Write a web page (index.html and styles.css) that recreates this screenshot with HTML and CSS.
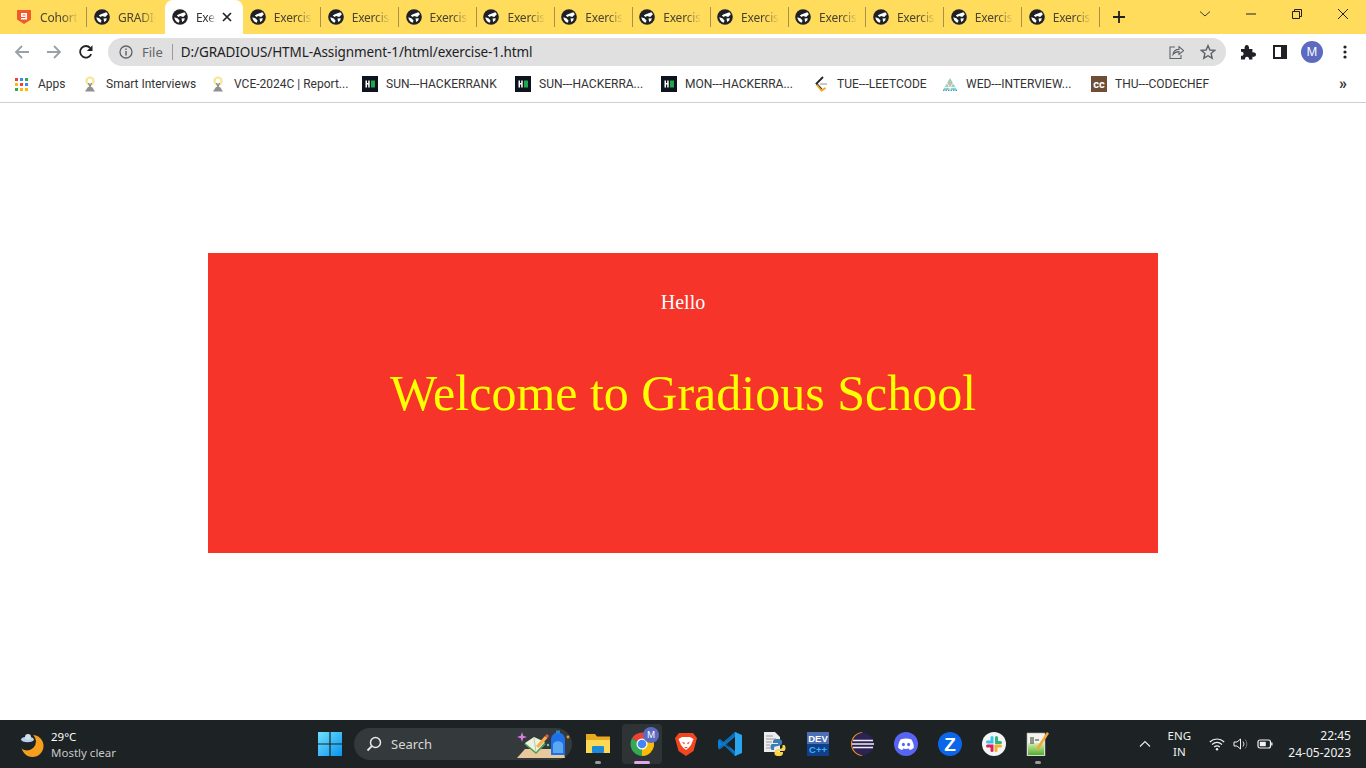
FILE: index.html
```html
<!DOCTYPE html>
<html lang="en">
<head>
    <meta charset="UTF-8">
    <meta name="viewport" content="width=device-width, initial-scale=1.0">
    <title>Exercise 1</title>
    <link rel="stylesheet" href="styles.css">
</head>
<body>
    <svg class="defs" width="0" height="0" aria-hidden="true">
        <symbol id="globe" viewBox="0 0 16 16">
            <circle cx="8" cy="8" r="7.8" fill="#202124"/>
            <path d="M4.8 6.6C6.6 4.8 9.6 4.6 12.4 3.2L13.9 5.3 11.2 7.9 8.2 6.9 6.5 8ZM2.3 8.2 5.8 9.6 7.6 11.8 6.6 13.7C4.3 13 2.700 11 2.3 8.2ZM9.5 9.4 12.8 9.200 12.2 11.4 10.2 13Z" fill="#fff"/>
        </symbol>
        <symbol id="hacker" viewBox="0 0 16 16">
            <rect width="16" height="16" fill="#0e141e"/>
            <path d="M3.5 4.5H5V7H6.2V4.5H7.7V11.5H6.2V8.6H5V11.5H3.5Z" fill="#fff"/>
            <rect x="9" y="4.5" width="4" height="7" fill="#1ba94c"/>
        </symbol>
        <symbol id="bulb" viewBox="0 0 16 16">
            <circle cx="8" cy="5" r="4.6" fill="#f5e690"/>
            <circle cx="8" cy="5" r="2.4" fill="#fff"/>
            <path d="M6.5 7 8 11 9.5 7" fill="none" stroke="#888" stroke-width="1.2"/>
            <path d="M3 15.5 6 11H10L13 15.5Z" fill="#8f8f8f"/>
        </symbol>
    </svg>

    <header class="tabstrip">
        <div class="tab">
            <svg class="favicon" viewBox="0 0 16 16"><path d="M1 1H15V10.5L8 15 1 10.5Z" fill="#f1592a"/><path d="M5 4H11V10.5H5V9H9.5V8H5ZM6.5 5.4V6.6H9.5V5.4Z" fill="#fff"/></svg>
            <span class="tab-title">Cohort</span>
        </div>
        <div class="tab tab-beforeactive"><svg class="favicon"><use href="#globe"/></svg><span class="tab-title">GRADIOUS</span></div>
        <div class="tab tab-active">
            <svg class="favicon"><use href="#globe"/></svg>
            <span class="tab-title">Exercise</span>
            <svg class="tab-close" viewBox="0 0 10 10"><path d="M1 1 9 9M9 1 1 9" stroke="#202124" stroke-width="1.7"/></svg>
        </div>
        <div class="tab"><svg class="favicon"><use href="#globe"/></svg><span class="tab-title">Exercise</span></div>
        <div class="tab"><svg class="favicon"><use href="#globe"/></svg><span class="tab-title">Exercise</span></div>
        <div class="tab"><svg class="favicon"><use href="#globe"/></svg><span class="tab-title">Exercise</span></div>
        <div class="tab"><svg class="favicon"><use href="#globe"/></svg><span class="tab-title">Exercise</span></div>
        <div class="tab"><svg class="favicon"><use href="#globe"/></svg><span class="tab-title">Exercise</span></div>
        <div class="tab"><svg class="favicon"><use href="#globe"/></svg><span class="tab-title">Exercise</span></div>
        <div class="tab"><svg class="favicon"><use href="#globe"/></svg><span class="tab-title">Exercise</span></div>
        <div class="tab"><svg class="favicon"><use href="#globe"/></svg><span class="tab-title">Exercise</span></div>
        <div class="tab"><svg class="favicon"><use href="#globe"/></svg><span class="tab-title">Exercise</span></div>
        <div class="tab"><svg class="favicon"><use href="#globe"/></svg><span class="tab-title">Exercise</span></div>
        <div class="tab"><svg class="favicon"><use href="#globe"/></svg><span class="tab-title">Exercise</span></div>
        <svg class="new-tab" viewBox="0 0 12 12"><path d="M6 0V12M0 6H12" stroke="#202124" stroke-width="1.8"/></svg>
        <div class="window-controls">
            <svg viewBox="0 0 12 12"><path d="M1 3.5 6 8 11 3.5" fill="none" stroke="#3c3a2a"/></svg>
            <svg viewBox="0 0 12 12"><path d="M1 6H11" stroke="#202124"/></svg>
            <svg viewBox="0 0 12 12"><path d="M3.5 3V1.5H10.5V8.5H9M1.5 3.5H8.5V10.5H1.5Z" fill="none" stroke="#202124"/></svg>
            <svg viewBox="0 0 12 12"><path d="M1 1 11 11M11 1 1 11" stroke="#202124"/></svg>
        </div>
    </header>

    <nav class="toolbar">
        <svg class="nav-icon" viewBox="0 0 16 16"><path d="M15 8H2M8 2 2 8 8 14" fill="none" stroke="#9aa0a6" stroke-width="1.8"/></svg>
        <svg class="nav-icon" viewBox="0 0 16 16"><path d="M1 8H14M8 2 14 8 8 14" fill="none" stroke="#9aa0a6" stroke-width="1.8"/></svg>
        <svg class="nav-icon" viewBox="0 0 16 16"><path d="M13.2 10.2A5.8 5.8 0 1 1 12.2 3.9" fill="none" stroke="#202124" stroke-width="1.8"/><path d="M14.5 1.2V7H8.8Z" fill="#202124"/></svg>
        <div class="omnibox">
            <svg class="info-icon" viewBox="0 0 14 14"><circle cx="7" cy="7" r="6" fill="none" stroke="#5f6368" stroke-width="1.3"/><path d="M7 6V10.4M7 3.4V5" stroke="#5f6368" stroke-width="1.5"/></svg>
            <span class="scheme">File</span>
            <span class="url">D:/GRADIOUS/HTML-Assignment-1/html/exercise-1.html</span>
            <svg class="omni-icon" viewBox="0 0 16 16"><path d="M7 3H2V14.5H13V11M5 10.5C5.5 6.5 8 5.4 11 5.4V2.6L15.5 6.6 11 10.4V7.6C8.6 7.6 6.6 8.4 5 10.5Z" fill="none" stroke="#5f6368" stroke-width="1.1"/></svg>
            <svg class="omni-icon" viewBox="0 0 16 16"><path d="M8 1.6 9.9 6 14.7 6.4 11.1 9.5 12.2 14.2 8 11.7 3.8 14.2 4.9 9.5 1.3 6.4 6.1 6Z" fill="none" stroke="#5f6368" stroke-width="1.4"/></svg>
        </div>
        <svg class="tool-icon tool-puzzle" viewBox="0 0 16 16"><path d="M1 5H4.6C4.2 2.8 5.2 1 6.8 1S9.4 2.8 9 5H12.4V8.4C14.6 8 16 9 16 10.6S14.6 13.2 12.4 12.8V15.5H9C9.2 13.8 8.4 12.8 7 12.8S4.8 13.8 5 15.5H1V11.8C2.6 12 3.6 11.2 3.6 9.8S2.6 7.6 1 7.8Z" fill="#202124"/></svg>
        <svg class="tool-icon tool-panel" viewBox="0 0 14 14"><path d="M0 0H14V14H0ZM2 2V12H8V2Z" fill="#202124" fill-rule="evenodd"/></svg>
        <span class="avatar">M</span>
        <svg class="tool-icon tool-menu" viewBox="0 0 4 14"><circle cx="2" cy="2" r="1.6" fill="#202124"/><circle cx="2" cy="7" r="1.6" fill="#202124"/><circle cx="2" cy="12" r="1.6" fill="#202124"/></svg>
    </nav>

    <div class="bookmarks">
        <div class="mark">
            <svg class="mark-icon" viewBox="0 0 13 13"><rect width="3" height="3" fill="#ea4335"/><rect x="5" width="3" height="3" fill="#4285f4"/><rect x="10" width="3" height="3" fill="#34a853"/><rect y="5" width="3" height="3" fill="#fbbc05"/><rect x="5" y="5" width="3" height="3" fill="#ea4335"/><rect x="10" y="5" width="3" height="3" fill="#4285f4"/><rect y="10" width="3" height="3" fill="#34a853"/><rect x="5" y="10" width="3" height="3" fill="#fbbc05"/><rect x="10" y="10" width="3" height="3" fill="#fbbc05"/></svg>
            <span>Apps</span>
        </div>
        <div class="mark"><svg class="mark-icon"><use href="#bulb"/></svg><span>Smart Interviews</span></div>
        <div class="mark"><svg class="mark-icon"><use href="#bulb"/></svg><span>VCE-2024C | Report...</span></div>
        <div class="mark"><svg class="mark-icon"><use href="#hacker"/></svg><span>SUN---HACKERRANK</span></div>
        <div class="mark"><svg class="mark-icon"><use href="#hacker"/></svg><span>SUN---HACKERRA...</span></div>
        <div class="mark"><svg class="mark-icon"><use href="#hacker"/></svg><span>MON---HACKERRA...</span></div>
        <div class="mark">
            <svg class="mark-icon" viewBox="0 0 16 16"><path d="M10 1 3.5 7.5 8.5 13" fill="none" stroke="#222" stroke-width="1.8"/><path d="M3.8 8.8 8.5 14.5 12.5 12" fill="none" stroke="#f89f1b" stroke-width="1.8"/><path d="M7 8H14" stroke="#bbb" stroke-width="1.6"/></svg>
            <span>TUE---LEETCODE</span>
        </div>
        <div class="mark">
            <svg class="mark-icon" viewBox="0 0 16 16"><path d="M8 2 1 14H15Z" fill="#8fd0cf"/><path d="M8 5 5.5 10H10.5Z" fill="#f0b27a"/><path d="M5 7 9 14M11 7 7 14M2.5 11.5H13.5" stroke="#fff" stroke-width=".8"/><path d="M1 14.3H15" stroke="#3fa9a9" stroke-width="1.2" stroke-dasharray="1.5 1"/></svg>
            <span>WED---INTERVIEW...</span>
        </div>
        <div class="mark">
            <svg class="mark-icon" viewBox="0 0 16 16"><rect width="16" height="16" fill="#6f4e37"/><text x="8" y="11.6" class="cc-text">cc</text></svg>
            <span>THU---CODECHEF</span>
        </div>
        <span class="mark-more">»</span>
    </div>

    <main class="page">
        <section class="hero">
            <p class="hero-hello">Hello</p>
            <h1 class="hero-title">Welcome to Gradious School</h1>
        </section>
    </main>

    <footer class="taskbar">
        <div class="weather">
            <svg class="weather-icon" viewBox="0 0 24 24"><circle cx="12.5" cy="13" r="11" fill="#f59f1d"/><circle cx="7" cy="8.5" r="9" fill="#1d2224"/><ellipse cx="7.5" cy="6.5" rx="6.5" ry="2.8" fill="#b9cfe9"/><circle cx="8" cy="4" r="3" fill="#cfdff2"/></svg>
            <div class="weather-text">
                <span class="weather-temp">29°C</span>
                <span class="weather-desc">Mostly clear</span>
            </div>
        </div>
        <svg class="start" viewBox="0 0 24 24">
            <defs><linearGradient id="win" x1="0" y1="0" x2="1" y2="1"><stop offset="0" stop-color="#6ee2fb"/><stop offset="1" stop-color="#0a93f0"/></linearGradient></defs>
            <path d="M0 0H11.4V11.4H0ZM12.6 0H24V11.4H12.6ZM0 12.6H11.4V24H0ZM12.6 12.6H24V24H12.6Z" fill="url(#win)"/>
        </svg>
        <div class="search">
            <svg class="search-icon" viewBox="0 0 16 16"><circle cx="9.5" cy="6.5" r="5" fill="none" stroke="#e8e8e8" stroke-width="1.5"/><path d="M5.8 10.2 1.5 14.5" stroke="#e8e8e8" stroke-width="1.8"/></svg>
            <span>Search</span>
            <svg class="search-art" viewBox="0 0 56 30">
                <path d="M2 29 10 20H48L50 29Z" fill="#e8c99b"/>
                <path d="M9 15 19 9 31 15 21 25Z" fill="#4f9d57"/><path d="M10 14 19 8 30 13 21 23Z" fill="#eef3e0"/>
                <path d="M19 8V9L21 23" stroke="#b8c8a8" fill="none"/>
                <path d="M21 17 30 7 32.5 9 23.5 19Z" fill="#f4b04a"/><path d="M30 7 32 5 34 7 32.5 9Z" fill="#e8584a"/>
                <path d="M36 26V11C36 1 50 1 50 11V26Z" fill="#1f6fe6"/><path d="M38 24V16C38 11 48 11 48 16V24Z" fill="#58a8f2"/><rect x="41" y="1.5" width="4" height="3" fill="#2a86c8"/>
                <circle cx="53" cy="8" r="1.4" fill="#e8a020"/><circle cx="33" cy="16" r="1.2" fill="#55d0d8"/>
                <path d="M7 3 8.2 6.8 12 8 8.2 9.2 7 13 5.8 9.2 2 8 5.8 6.8Z" fill="#d97ee0"/>
            </svg>
        </div>
        <div class="apps">
            <div class="app">
                <svg viewBox="0 0 24 24"><path d="M0 2H9L11 4.5H24V21H0Z" fill="#e8a820"/><path d="M0 8H24V21H0Z" fill="#fbd957"/><rect x="6" y="14" width="12" height="7" rx="1" fill="#1c8ad8"/></svg>
                <i class="app-dot"></i>
            </div>
            <div class="app app-active">
                <svg viewBox="0 0 24 24">
                    <path d="M12 12 2 6.2A12 12 0 0 1 22.4 6Z" fill="#ea4335"/>
                    <path d="M12 12 22.4 6A12 12 0 0 1 12 24Z" fill="#fbbc05"/>
                    <path d="M12 12 12 24A12 12 0 0 1 2 6.2Z" fill="#34a853"/>
                    <circle cx="12" cy="12" r="5.5" fill="#fff"/><circle cx="12" cy="12" r="4.3" fill="#4285f4"/>
                </svg>
                <span class="app-badge">M</span>
                <i class="app-bar"></i>
            </div>
            <div class="app">
                <svg viewBox="0 0 24 24"><path d="M5 1H19L23 6 19.5 19 12 24 4.5 19 1 6Z" fill="#f1461f"/><path d="M4.5 7 8 5H16L19.5 7 17 13 15 15.5 12 18 9 15.5 7 13Z" fill="#fff"/><path d="M8 9.5 11 11 10 12.5ZM16 9.5 13 11 14 12.5ZM10 15H14L12 16.5Z" fill="#f1461f"/></svg>
            </div>
            <div class="app">
                <svg viewBox="0 0 24 24"><path d="M17 0 20 2 5.5 14.5 1.5 17.5 0 16V8.5L1.5 7 5.5 10Z" fill="#0e7fd0"/><path d="M17 24 20 22 5.5 9.5 9 12Z" fill="#0e7fd0"/><path d="M1 8.5 17 24 19 23 2 7ZM1 15.5 17 0 19 1 2 17Z" fill="#0a6cb8"/><path d="M17 0 24 3V21L17 24Z" fill="#2aa6f0"/></svg>
            </div>
            <div class="app">
                <svg viewBox="0 0 24 24"><path d="M2 0H13L18 5V20H2Z" fill="#ececec"/><path d="M4 4H11M4 7H14M4 10H10M4 13H8M4 16H8" stroke="#9a9a9a"/><path d="M15 7C11 7 11 9 11 11H16V12H10C8 12 8 18 10 18H12V15.5C12 13.5 20 14.5 20 11.5V9.5C20 7.5 18 7 15 7Z" fill="#3c7fb5"/><path d="M17 24C21 24 21 22 21 20H16V19H22C24 19 24 13 22 13H20.5V15.5C20.5 17.5 12.5 16.5 12.5 19.5V21.5C12.5 23.5 14 24 17 24Z" fill="#fbd44b"/></svg>
            </div>
            <div class="app">
                <svg viewBox="0 0 24 24"><rect width="22" height="24" x="1" fill="#123f8a"/><rect width="22" height="12" x="1" fill="#4d6fb5"/><text x="12" y="10" class="dev-text">DEV</text><text x="12" y="21" class="cpp-text">C++</text></svg>
            </div>
            <div class="app">
                <svg viewBox="0 0 24 24"><path d="M13 0A12 12 0 0 0 13 24 13 13 0 0 1 13 0Z" fill="#f39a1d"/><circle cx="13" cy="12" r="11" fill="#2c2255"/><path d="M3 8.5H23M2 12H24M3 15.5H23" stroke="#eee" stroke-width="1.5"/></svg>
            </div>
            <div class="app">
                <svg viewBox="0 0 24 24"><circle cx="12" cy="12" r="12" fill="#5865f2"/><path d="M6.5 7.5C10 6 14 6 17.5 7.5 19 10 20 13 19.8 16 18 17.4 16.6 17.8 15.6 18L14.8 16.5C13 17 11 17 9.2 16.5L8.4 18C7.4 17.8 6 17.4 4.2 16 4 13 5 10 6.5 7.5Z" fill="#fff"/><ellipse cx="9.4" cy="12.5" rx="1.5" ry="1.8" fill="#5865f2"/><ellipse cx="14.6" cy="12.5" rx="1.5" ry="1.8" fill="#5865f2"/></svg>
            </div>
            <div class="app">
                <svg viewBox="0 0 24 24"><circle cx="12" cy="12" r="12" fill="#0b66ea"/><text x="12" y="18.5" class="zoom-text">Z</text></svg>
            </div>
            <div class="app">
                <svg viewBox="0 0 24 24"><circle cx="12" cy="12" r="12" fill="#f4f4f4"/><g stroke-width="3" stroke-linecap="round" fill="none"><path d="M14.5 5.5V10.5" stroke="#2eb67d"/><path d="M14.5 10.5H18.5" stroke="#2eb67d"/><path d="M14 14H18.5" stroke="#ecb22e"/><path d="M14 14V18.5" stroke="#ecb22e"/><path d="M10 18.5V14H5.5" stroke="#e01e5a"/><path d="M10 5.5V10H5.5" stroke="#36c5f0"/></g></svg>
            </div>
            <div class="app">
                <svg viewBox="0 0 24 24">
                    <defs><linearGradient id="pad" x1="0" y1="0" x2="0" y2="1"><stop offset="0" stop-color="#d8efb0"/><stop offset="1" stop-color="#4fae2e"/></linearGradient></defs>
                    <path d="M1 1H19V24H1Z" fill="#f4f4ec" stroke="#aaa" stroke-width=".6"/><path d="M2 11H18V23H2Z" fill="url(#pad)"/><path d="M5 5V12M7 5V12M9 8H13" stroke="#333"/><path d="M21 0 23 1.5 13 17 10 19 11 15Z" fill="#f2a93b"/>
                </svg>
                <i class="app-dot"></i>
            </div>
        </div>
        <div class="tray">
            <svg class="tray-chevron" viewBox="0 0 12 8"><path d="M1 6.5 6 1.5 11 6.5" fill="none" stroke="#e8e8e8" stroke-width="1.2"/></svg>
            <div class="lang"><span>ENG</span><span>IN</span></div>
            <svg class="tray-icon" viewBox="0 0 16 14"><path d="M.8 5C5 1 11 1 15.2 5M3 7.5C6 5 10 5 13 7.5M5.2 10C7 8.6 9 8.6 10.8 10" fill="none" stroke="#f2f2f2" stroke-width="1.2"/><circle cx="8" cy="12.3" r="1.2" fill="#f2f2f2"/></svg>
            <svg class="tray-icon" viewBox="0 0 16 14"><path d="M1 5H4L7.5 2V12L4 9H1Z" fill="none" stroke="#f2f2f2"/><path d="M10 4.5A4 4 0 0 1 10 9.5" fill="none" stroke="#ddd"/><path d="M12.2 2.5A7 7 0 0 1 12.2 11.5" fill="none" stroke="#777"/></svg>
            <svg class="tray-icon" viewBox="0 0 16 14"><rect x="1" y="3" width="12.5" height="8" rx="2" fill="none" stroke="#f2f2f2" stroke-width="1.2"/><rect x="2.8" y="4.8" width="6" height="4.4" fill="#f2f2f2"/><rect x="14.2" y="5.5" width="1.3" height="3" fill="#f2f2f2"/></svg>
            <div class="clock"><span>22:45</span><span>24-05-2023</span></div>
        </div>
    </footer>
</body>
</html>
```

FILE: styles.css
```css
* {
    box-sizing: border-box;
}
html, body {
    height: 100%;
}
body {
    margin: 0;
    display: flex;
    flex-direction: column;
    height: 768px;
    overflow: hidden;
    font-family: "Noto Sans", sans-serif;
    background-color: #fff;
    color: #333;
}
.defs {
    position: absolute;
}

/* tab strip */
.tabstrip {
    flex: 0 0 34px;
    display: flex;
    align-items: stretch;
    padding-left: 9.6px;
    background-color: #ffdc5c;
}
.tab {
    flex: 0 0 77.9px;
    display: flex;
    align-items: center;
    padding-left: 6.5px;
    position: relative;
}
.tab::after {
    content: "";
    position: absolute;
    right: 0;
    top: 7px;
    height: 20px;
    width: 1px;
    background-color: #a8904a;
}
.tab-active::after, .tab-beforeactive::after {
    display: none;
}
.tab-active {
    background-color: #fff;
    border-radius: 8px 8px 0 0;
}
.favicon {
    flex: 0 0 16px;
    width: 16px;
    height: 16px;
    margin-right: 8px;
}
.tab-title {
    width: 38px;
    overflow: hidden;
    white-space: nowrap;
    font-size: 12px;
    letter-spacing: -.2px;
    color: #4a4330;
    -webkit-mask-image: linear-gradient(to right, #000 60%, transparent);
    mask-image: linear-gradient(to right, #000 60%, transparent);
}
.tab-active .tab-title {
    width: 20px;
    color: #333;
}
.tab-close {
    width: 10px;
    height: 10px;
    margin-left: 6px;
}
.new-tab {
    width: 12px;
    height: 12px;
    margin: 11px 0 0 13px;
}
.window-controls {
    display: flex;
    margin-left: auto;
    padding: 8px 17px 0 0;
    gap: 34px;
}
.window-controls svg {
    width: 12px;
    height: 12px;
}

/* toolbar */
.toolbar {
    flex: 0 0 34px;
    display: flex;
    align-items: center;
    padding: 2px 0 0 14px;
    background-color: #fff;
}
.nav-icon {
    width: 16px;
    height: 16px;
    margin-right: 16px;
}
.omnibox {
    flex: 0 0 1118px;
    height: 28px;
    margin-left: -2px;
    display: flex;
    align-items: center;
    padding: 0 10px 0 11px;
    border-radius: 14px;
    background-color: #e0e0e0;
    font-size: 13.5px;
}
.info-icon {
    width: 14px;
    height: 14px;
    margin-right: 9px;
}
.scheme {
    color: #5f6368;
    padding-right: 9px;
    margin-right: 8px;
    border-right: 1px solid #9b9b9b;
    line-height: 16px;
    font-size: 13px;
}
.url {
    flex: 1;
    color: #202124;
    letter-spacing: -.1px;
}
.omni-icon {
    width: 16px;
    height: 16px;
    margin-left: 16px;
}
.tool-icon {
    flex: none;
}
.tool-puzzle {
    width: 16px;
    height: 16px;
    margin-left: 14px;
}
.tool-panel {
    width: 14px;
    height: 14px;
    margin-left: 17px;
}
.avatar {
    flex: 0 0 22px;
    height: 22px;
    margin-left: 14px;
    border-radius: 50%;
    background-color: #5c6bc0;
    color: #fff;
    font-size: 12px;
    line-height: 22px;
    text-align: center;
}
.tool-menu {
    width: 4px;
    height: 14px;
    margin-left: 20px;
}

/* bookmarks */
.bookmarks {
    flex: 0 0 35px;
    display: grid;
    grid-template-columns: 67px 128px 152px 153px 146px 152px 129px 149px 1fr auto;
    align-items: center;
    padding: 0 19px 2px 15px;
    border-bottom: 1px solid #cfcfcf;
    font-family: Roboto, sans-serif;
    font-size: 12px;
}
.mark {
    display: flex;
    align-items: center;
    white-space: nowrap;
    color: #333;
}
.mark-icon {
    flex: 0 0 16px;
    width: 16px;
    height: 16px;
    margin-right: 8px;
}
.mark:first-child .mark-icon {
    flex-basis: 13px;
    width: 13px;
    height: 13px;
    margin-right: 10px;
}
.cc-text {
    fill: #fff;
    font-size: 11px;
    font-weight: 700;
    text-anchor: middle;
}
.mark-more {
    font-size: 16px;
    font-weight: 700;
    color: #333;
    line-height: 16px;
}

/* page content */
.page {
    flex: 1;
    padding-top: 150px;
    background-color: #fff;
}
.hero {
    width: 950px;
    height: 300px;
    margin: 0 auto;
    padding-top: 38px;
    background-color: #f63429;
    text-align: center;
    font-family: "Liberation Serif", serif;
}
.hero-hello {
    margin: 0;
    color: #fff;
    font-size: 20px;
    line-height: 23px;
}
.hero-title {
    margin: 47px 0 0;
    color: #ffff00;
    font-size: 50px;
    font-weight: 400;
    line-height: 64px;
}

/* windows taskbar */
.taskbar {
    flex: 0 0 48px;
    display: flex;
    align-items: center;
    background-color: #1d2224;
    color: #fff;
}
.weather {
    flex: 0 0 318px;
    display: flex;
    align-items: center;
    padding: 1px 0 0 20px;
}
.weather-icon {
    width: 24px;
    height: 24px;
    margin-right: 7px;
}
.weather-text {
    display: flex;
    flex-direction: column;
    font-size: 11.5px;
    line-height: 16px;
}
.weather-desc {
    color: #c8c8c8;
}
.start {
    width: 24px;
    height: 24px;
}
.search {
    flex: 0 0 218px;
    height: 32px;
    margin-left: 12px;
    display: flex;
    align-items: center;
    padding-left: 12px;
    border-radius: 16px;
    background-color: #343a3b;
    font-size: 13px;
    color: #d8d8d8;
    position: relative;
}
.search-icon {
    width: 16px;
    height: 16px;
    margin-right: 9px;
}
.search-art {
    position: absolute;
    right: 1px;
    top: 1px;
    width: 56px;
    height: 30px;
}
.apps {
    display: flex;
    margin-left: 4px;
}
.app {
    flex: 0 0 44px;
    height: 40px;
    display: flex;
    align-items: center;
    justify-content: center;
    position: relative;
}
.app svg {
    width: 24px;
    height: 24px;
}
.app-active {
    background-color: #2e3436;
    border-radius: 4px;
    margin: 0 2px;
    flex-basis: 40px;
}
.app-badge {
    position: absolute;
    left: 21px;
    top: 3px;
    width: 16px;
    height: 16px;
    border-radius: 50%;
    background-color: #5c6bc0;
    font-size: 9px;
    line-height: 16px;
    text-align: center;
}
.app-dot {
    position: absolute;
    bottom: 0;
    left: 19px;
    width: 6px;
    height: 3px;
    border-radius: 2px;
    background-color: #9a9a9a;
}
.app-bar {
    position: absolute;
    bottom: 0;
    left: 12px;
    width: 16px;
    height: 3px;
    border-radius: 2px;
    background-color: #e0a6ec;
}
.dev-text, .cpp-text, .zoom-text {
    text-anchor: middle;
    font-weight: 700;
    font-family: "Liberation Sans", sans-serif;
}
.dev-text {
    fill: #fff;
    font-size: 9.5px;
}
.cpp-text {
    fill: #35b4f0;
    font-size: 9.5px;
}
.zoom-text {
    fill: #fff;
    font-size: 19px;
}
.tray {
    display: flex;
    align-items: center;
    margin-left: auto;
    padding-right: 15px;
    font-size: 11.5px;
    color: #f2f2f2;
}
.tray-chevron {
    width: 12px;
    height: 8px;
    margin-right: 14px;
}
.lang {
    display: flex;
    flex-direction: column;
    align-items: center;
    width: 28px;
    line-height: 16px;
    margin-right: 16px;
}
.tray-icon {
    width: 16px;
    height: 14px;
    margin-right: 8px;
}
.clock {
    display: flex;
    flex-direction: column;
    align-items: flex-end;
    font-size: 12px;
    line-height: 17px;
    margin-left: 7px;
}
```
